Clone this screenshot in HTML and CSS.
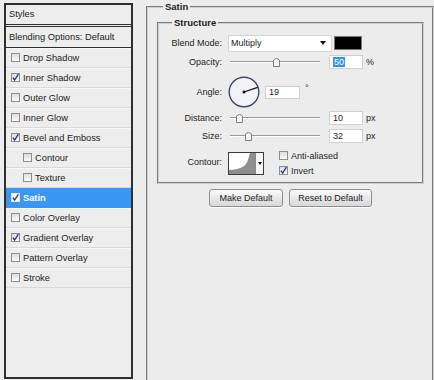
FILE: index.html
```html
<!DOCTYPE html>
<html>
<head>
<meta charset="utf-8">
<link rel="stylesheet" href="styles.css">
</head>
<body>
<div class="styles-panel">
  <div class="sp-head">Styles</div>
  <div class="sp-blend">Blending Options: Default</div>
  <ul class="sp-list">
    <li class="item"><span class="cb"></span>Drop Shadow</li>
    <li class="item"><span class="cb"><svg viewBox="0 0 9 9"><path d="M1.8 4.6 L3.6 7 L7.4 1.2" /></svg></span>Inner Shadow</li>
    <li class="item"><span class="cb"></span>Outer Glow</li>
    <li class="item"><span class="cb"></span>Inner Glow</li>
    <li class="item"><span class="cb"><svg viewBox="0 0 9 9"><path d="M1.8 4.6 L3.6 7 L7.4 1.2" /></svg></span>Bevel and Emboss</li>
    <li class="item sub"><span class="cb"></span>Contour</li>
    <li class="item sub"><span class="cb"></span>Texture</li>
    <li class="item selected"><span class="cb"><svg viewBox="0 0 9 9"><path d="M1.8 4.6 L3.6 7 L7.4 1.2" /></svg></span>Satin</li>
    <li class="item"><span class="cb"></span>Color Overlay</li>
    <li class="item"><span class="cb"><svg viewBox="0 0 9 9"><path d="M1.8 4.6 L3.6 7 L7.4 1.2" /></svg></span>Gradient Overlay</li>
    <li class="item"><span class="cb"></span>Pattern Overlay</li>
    <li class="item"><span class="cb"></span>Stroke</li>
  </ul>
</div>

<fieldset class="group outer">
  <legend>Satin</legend>
  <fieldset class="group structure">
    <legend>Structure</legend>

    <div class="row r-blend">
      <span class="lbl">Blend Mode:</span>
      <div class="select"><span>Multiply</span><span class="arrow"></span></div>
      <span class="swatch"></span>
    </div>

    <div class="row r-opacity">
      <span class="lbl">Opacity:</span>
      <div class="slider"><span class="track"></span><span class="thumb" style="left:43px"><svg viewBox="0 0 7 10"><path d="M0.5 3.2 Q3.5 -0.2 6.5 3.2 V9.5 H0.5 Z"/></svg></span></div>
      <span class="field"><span class="sel">50</span></span>
      <span class="unit">%</span>
    </div>

    <div class="row r-angle">
      <span class="lbl">Angle:</span>
      <svg class="dial" viewBox="0 0 32 32" width="32" height="32">
        <circle cx="16" cy="16" r="14.8" fill="#f3f3f7" stroke="#3d4666" stroke-width="1.4"/>
        <line x1="16" y1="16" x2="29.6" y2="11.3" stroke="#111" stroke-width="1.3"/>
        <circle cx="16" cy="16" r="1.5" fill="#111"/>
      </svg>
      <span class="field f-angle">19</span>
      <span class="deg">°</span>
    </div>

    <div class="row r-distance">
      <span class="lbl">Distance:</span>
      <div class="slider"><span class="track"></span><span class="thumb" style="left:6px"><svg viewBox="0 0 7 10"><path d="M0.5 3.2 Q3.5 -0.2 6.5 3.2 V9.5 H0.5 Z"/></svg></span></div>
      <span class="field">10</span>
      <span class="unit">px</span>
    </div>

    <div class="row r-size">
      <span class="lbl">Size:</span>
      <div class="slider"><span class="track"></span><span class="thumb" style="left:15px"><svg viewBox="0 0 7 10"><path d="M0.5 3.2 Q3.5 -0.2 6.5 3.2 V9.5 H0.5 Z"/></svg></span></div>
      <span class="field">32</span>
      <span class="unit">px</span>
    </div>

    <div class="row r-contour">
      <span class="lbl">Contour:</span>
      <div class="contour">
        <svg class="preview" viewBox="0 0 26 21" width="26" height="21">
          <rect width="26" height="21" fill="#fff"/>
          <path d="M0 21 L0 17 C8 16.5 14 15 17 11 C19 8 20 3 21 0 L26 0 L26 21 Z" fill="#8e8e8e"/>
        </svg>
        <span class="drop"><span class="arrow"></span></span>
      </div>
      <div class="checks">
        <label class="chk"><span class="cb"></span>Anti-aliased</label>
        <label class="chk"><span class="cb"><svg viewBox="0 0 9 9"><path d="M1.8 4.6 L3.6 7 L7.4 1.2" /></svg></span>Invert</label>
      </div>
    </div>
  </fieldset>

  <div class="buttons">
    <button class="btn b-make">Make Default</button>
    <button class="btn b-reset">Reset to Default</button>
  </div>
</fieldset>
</body>
</html>
```

FILE: styles.css
```css
html, body {
  margin: 0;
  padding: 0;
}
body {
  width: 434px;
  height: 380px;
  overflow: hidden;
  background: #ececec;
  display: flex;
  align-items: flex-start;
  font-family: "Liberation Sans", Arial, sans-serif;
  color: #1c1c1c;
}

/* ---------- left styles list ---------- */
.styles-panel {
  box-sizing: border-box;
  width: 129px;
  height: 376px;
  margin: 3px 0 0 4px;
  border: 2px solid #2e2e2e;
  background: #ededed;
  font-size: 9.3px;
  flex: none;
}
.sp-head {
  height: 19px;
  line-height: 19px;
  padding-left: 3px;
  border-bottom: 3px double #2e2e2e;
}
.sp-blend {
  height: 20px;
  line-height: 20px;
  padding-left: 3px;
  border-bottom: 1px solid #2e2e2e;
}
.sp-list {
  list-style: none;
  margin: 0;
  padding: 0;
}
.item {
  box-sizing: border-box;
  height: 20px;
  display: flex;
  align-items: center;
  padding-left: 5px;
  border-bottom: 1px solid #d9d9d9;
  box-shadow: inset 0 1px 0 #f7f7f7;
}
.item.sub {
  padding-left: 17px;
}
.item.selected {
  background: #3b95f2;
  color: #fff;
  font-weight: bold;
  box-shadow: none;
  border-bottom-color: #3b95f2;
}
.cb {
  box-sizing: border-box;
  width: 9px;
  height: 9px;
  margin-right: 3px;
  border: 1px solid #8d8d8d;
  background: linear-gradient(#dcdcdc, #fbfbfb);
  display: inline-flex;
  flex: none;
}
.cb svg {
  width: 9px;
  height: 9px;
  margin: -1px;
  fill: none;
  stroke: #23358a;
  stroke-width: 1.3;
}
.item.selected .cb {
  background: #fff;
  border-color: #e8e8e8;
}

/* ---------- right groups ---------- */
.group {
  margin: 0;
  min-width: 0;
  box-sizing: border-box;
  border: 2px groove #cfcfcf;
}
.group legend {
  font-weight: bold;
  font-size: 9.5px;
  line-height: 13px;
  height: 13px;
  padding: 0 2px;
}
.outer {
  width: 288px;
  height: 380px;
  border-bottom: none;
  margin-left: 13px;
  padding: 0 0 0 9px;
  flex: none;
}
.outer > legend {
  margin-left: 6px;
}
.structure {
  width: 267px;
  margin-top: 3px;
  padding: 0 0 5px 0;
}
.structure > legend {
  margin-left: 13px;
}

.row {
  display: flex;
  align-items: center;
  font-size: 9px;
}
.lbl {
  width: 63px;
  margin-right: 6px;
  text-align: right;
  flex: none;
}
.r-blend { margin-top: 5px; height: 18px; }
.r-opacity { margin-top: 3px; height: 14px; }
.r-angle { margin-top: 7px; height: 32px; }
.r-distance { margin-top: 3px; height: 14px; }
.r-size { margin-top: 4px; height: 14px; }
.r-contour { margin-top: 4px; height: 30px; }

.select {
  box-sizing: border-box;
  width: 104px;
  height: 17px;
  background: #fff;
  border: 1px solid #d4d4d4;
  display: flex;
  align-items: center;
  justify-content: space-between;
  padding: 0 5px 0 2px;
}
.arrow {
  width: 0;
  height: 0;
  border-left: 3.5px solid transparent;
  border-right: 3.5px solid transparent;
  border-top: 4px solid #111;
}
.swatch {
  box-sizing: border-box;
  width: 28px;
  height: 14px;
  margin-left: 2px;
  background: #000;
  border: 1px solid #777;
}

.slider {
  position: relative;
  width: 90px;
  height: 14px;
  margin-left: 2px;
  flex: none;
}
.track {
  display: block;
  position: absolute;
  left: 0;
  right: 0;
  top: 6px;
  height: 1px;
  background: #9a9a9a;
  border-bottom: 1px solid #fff;
}
.thumb {
  position: absolute;
  top: 2px;
  width: 7px;
  height: 10px;
}
.thumb svg {
  display: block;
  width: 7px;
  height: 10px;
  fill: #f3f3f3;
  stroke: #7b7b7b;
  stroke-width: 1;
}
.field {
  box-sizing: border-box;
  width: 34px;
  height: 14px;
  margin-left: 9px;
  background: #fff;
  border: 1px solid #cfcfcf;
  padding-left: 3px;
  line-height: 12px;
  flex: none;
}
.sel {
  background: #3a8fe8;
  color: #fff;
  padding: 0 1px;
}
.unit {
  margin-left: 3px;
}
.dial {
  flex: none;
  display: block;
}
.f-angle {
  width: 35px;
  height: 13px;
  margin-left: 5px;
  line-height: 11px;
}
.deg {
  align-self: flex-start;
  margin: 7px 0 0 5px;
}

.contour {
  box-sizing: border-box;
  align-self: flex-start;
  margin-top: 5px;
  width: 36px;
  height: 23px;
  border: 1px solid #3a3a3a;
  display: flex;
  flex: none;
}
.preview {
  display: block;
}
.drop {
  flex: 1;
  border-left: 1px solid #8a8a8a;
  background: #f5f5f5;
  display: flex;
  align-items: center;
  justify-content: center;
}
.drop .arrow {
  border-left-width: 2.5px;
  border-right-width: 2.5px;
  border-top-width: 3px;
}
.checks {
  align-self: flex-start;
  margin: 1px 0 0 15px;
  display: flex;
  flex-direction: column;
}
.chk {
  height: 15px;
  display: flex;
  align-items: center;
}

.buttons {
  width: 267px;
  margin-top: 5px;
  display: flex;
  justify-content: center;
  gap: 6px;
}
.btn {
  box-sizing: border-box;
  height: 18px;
  padding: 0;
  font-family: "Liberation Sans", Arial, sans-serif;
  font-size: 9px;
  color: #1c1c1c;
  border: 1px solid #8e8e8e;
  border-radius: 3px;
  background: linear-gradient(#fbfbfb, #e6e6e6 55%, #d9d9d9);
  box-shadow: 0 1px 0 #fff;
}
.b-make { width: 74px; }
.b-reset { width: 83px; }
```
